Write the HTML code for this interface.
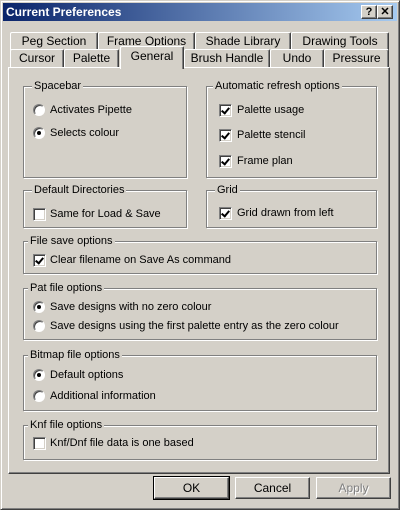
<!DOCTYPE html>
<html><head><style>
*{box-sizing:border-box;margin:0;padding:0}
body{width:400px;height:510px;overflow:hidden;background:#d4d0c8;font-family:"Liberation Sans",sans-serif;font-size:11px;color:#000;position:relative}
.win{position:absolute;left:0;top:0;width:400px;height:510px;border:1px solid;border-color:#d4d0c8 #404040 #404040 #d4d0c8;box-shadow:inset 1px 1px #fff,inset -1px -1px #808080}
.title{position:absolute;left:3px;top:3px;width:394px;height:18px;background:linear-gradient(to right,#0a246a,#a6caf0);color:#fff;font-weight:bold;font-size:12px;line-height:18px;padding-left:3px}
.tb{position:absolute;top:5px;width:16px;height:14px;background:#d4d0c8;border:1px solid;border-color:#fff #404040 #404040 #fff;box-shadow:inset -1px -1px #808080;font-weight:bold;font-size:11px;line-height:12px;text-align:center;color:#000}
.a{position:absolute}
.tab{position:absolute;background:#d4d0c8;border:1px solid;border-bottom:none;border-color:#fff #404040 #404040 #fff;border-radius:2px 2px 0 0;box-shadow:inset -1px 0 #808080;text-align:center;line-height:16px;font-size:12px}
.panel{position:absolute;left:8px;top:67px;width:382px;height:407px;border:1px solid;border-color:#fff #404040 #404040 #fff;box-shadow:inset -1px -1px #808080}
.grp{position:absolute;border:1px solid #808080;box-shadow:1px 1px #fff,inset 1px 1px #fff}
.grp span{position:absolute;top:-8px;left:8px;background:#d4d0c8;padding:0 2px;line-height:14px}
.cb{position:absolute;width:13px;height:13px;background:#fff;border:1px solid;border-color:#808080 #fff #fff #808080;box-shadow:inset 1px 1px #404040,inset -1px -1px #d4d0c8}
.cb.on::after{content:"";position:absolute;left:3px;top:1px;width:3px;height:6px;border:solid #000;border-width:0 2px 2px 0;transform:rotate(40deg)}
.rb{position:absolute;width:12px;height:12px;border-radius:50%;background:#fff;border:1px solid;border-color:#808080 #fff #fff #808080;box-shadow:inset 1px 1px #404040}
.rb.on::after{content:"";position:absolute;left:3px;top:3px;width:4px;height:4px;border-radius:50%;background:#000}
.lb{position:absolute;line-height:14px}
.btn{position:absolute;top:477px;height:22px;border:1px solid;border-color:#fff #404040 #404040 #fff;box-shadow:inset -1px -1px #808080;text-align:center;line-height:20px;font-size:12px}
</style></head><body>
<div class="win"></div>
<div class="title">Current Preferences</div>
<div class="tb" style="left:361px">?</div>
<div class="tb" style="left:377px">✕</div>

<div class="tab" style="left:10px;top:32px;width:88px;height:18px">Peg Section</div>
<div class="tab" style="left:98px;top:32px;width:97px;height:18px">Frame Options</div>
<div class="tab" style="left:195px;top:32px;width:96px;height:18px">Shade Library</div>
<div class="tab" style="left:291px;top:32px;width:98px;height:18px">Drawing Tools</div>

<div class="panel"></div>
<div class="tab" style="left:10px;top:49px;width:54px;height:18px">Cursor</div>
<div class="tab" style="left:64px;top:49px;width:55px;height:18px">Palette</div>
<div class="tab" style="left:184px;top:49px;width:86px;height:18px">Brush Handle</div>
<div class="tab" style="left:270px;top:49px;width:54px;height:18px">Undo</div>
<div class="tab" style="left:324px;top:49px;width:65px;height:18px">Pressure</div>
<div class="tab" style="left:120px;top:46px;width:64px;height:23px;line-height:18px;z-index:2">General</div>

<div class="grp" style="left:23px;top:86px;width:164px;height:92px"><span>Spacebar</span></div>
<div class="rb" style="left:33px;top:104px"></div><div class="lb" style="left:50px;top:103px">Activates Pipette</div>
<div class="rb on" style="left:33px;top:127px"></div><div class="lb" style="left:50px;top:126px">Selects colour</div>

<div class="grp" style="left:206px;top:86px;width:171px;height:92px"><span style="left:6px">Automatic refresh options</span></div>
<div class="cb on" style="left:219px;top:104px"></div><div class="lb" style="left:237px;top:103px">Palette usage</div>
<div class="cb on" style="left:219px;top:129px"></div><div class="lb" style="left:237px;top:128px">Palette stencil</div>
<div class="cb on" style="left:219px;top:155px"></div><div class="lb" style="left:237px;top:154px">Frame plan</div>

<div class="grp" style="left:23px;top:190px;width:164px;height:38px"><span>Default Directories</span></div>
<div class="cb" style="left:33px;top:208px"></div><div class="lb" style="left:50px;top:207px">Same for Load &amp; Save</div>

<div class="grp" style="left:206px;top:190px;width:171px;height:38px"><span>Grid</span></div>
<div class="cb on" style="left:219px;top:207px"></div><div class="lb" style="left:237px;top:206px">Grid drawn from left</div>

<div class="grp" style="left:23px;top:241px;width:354px;height:33px"><span style="left:4px">File save options</span></div>
<div class="cb on" style="left:33px;top:254px"></div><div class="lb" style="left:50px;top:253px">Clear filename on Save As command</div>

<div class="grp" style="left:23px;top:288px;width:354px;height:52px"><span style="left:4px">Pat file options</span></div>
<div class="rb on" style="left:33px;top:301px"></div><div class="lb" style="left:50px;top:300px">Save designs with no zero colour</div>
<div class="rb" style="left:33px;top:320px"></div><div class="lb" style="left:50px;top:319px">Save designs using the first palette entry as the zero colour</div>

<div class="grp" style="left:23px;top:355px;width:354px;height:56px"><span style="left:4px">Bitmap file options</span></div>
<div class="rb on" style="left:33px;top:369px"></div><div class="lb" style="left:50px;top:368px">Default options</div>
<div class="rb" style="left:33px;top:390px"></div><div class="lb" style="left:50px;top:389px">Additional information</div>

<div class="grp" style="left:23px;top:425px;width:354px;height:35px"><span style="left:4px">Knf file options</span></div>
<div class="cb" style="left:33px;top:437px"></div><div class="lb" style="left:50px;top:436px">Knf/Dnf file data is one based</div>

<div class="btn" style="left:154px;width:75px;outline:1px solid #000">OK</div>
<div class="btn" style="left:235px;width:75px">Cancel</div>
<div class="btn" style="left:316px;width:75px;color:#808080;text-shadow:1px 1px #fff">Apply</div>
</body></html>
